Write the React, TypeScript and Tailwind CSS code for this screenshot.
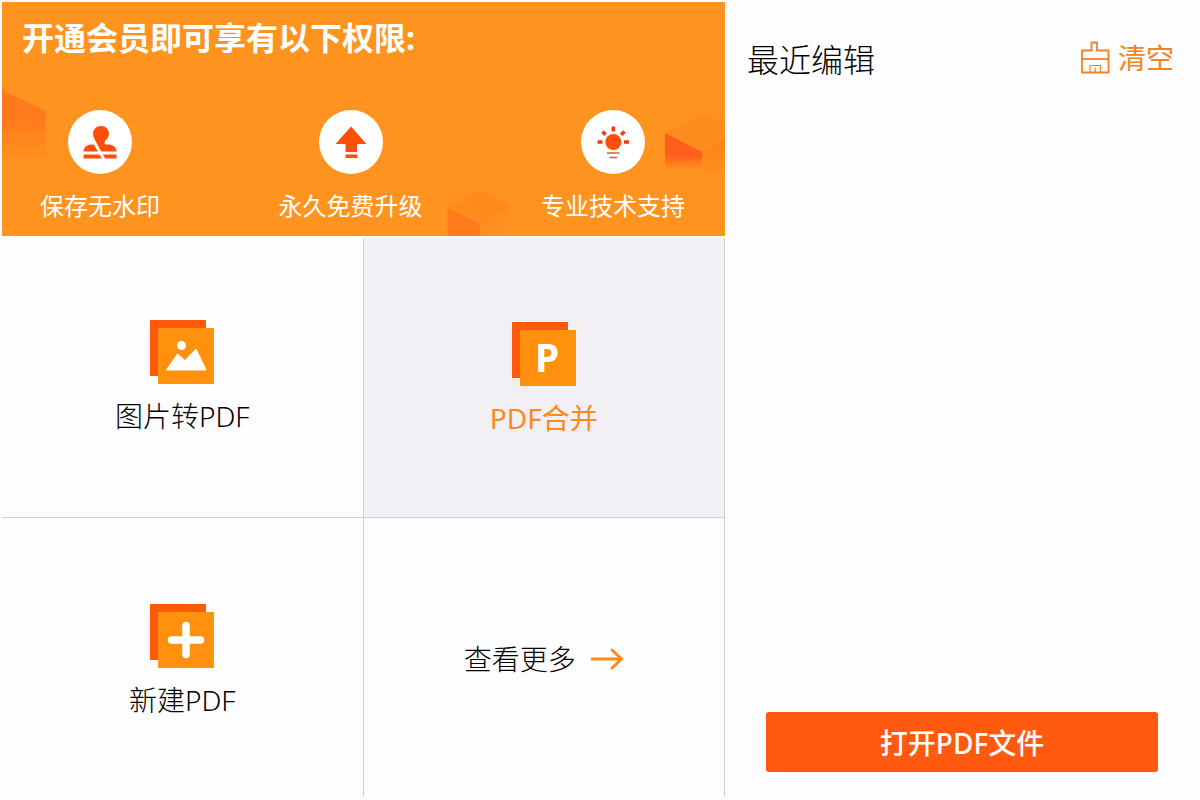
import React from 'react'

interface Feature {
  label: string
  icon: React.ReactNode
}

interface Tool {
  label: string
  icon: React.ReactNode
  cellClass: string
  textClass: string
}

function StampIcon() {
  return (
    <svg viewBox="0 0 64 64" className="w-16 h-16" fill="#ff4e0a" aria-hidden="true">
      <path d="M25 23.500C25 19.500 28.500 16 33 16C37.500 16 41 19.500 41 23.500C41 26.500 39.500 28.500 37.500 30.500C36.500 31.500 36.300 33 37 34.500H41C45 34.500 48.500 37.500 48.500 41.500H15.500C15.500 37.500 19 34.500 23 34.500H27C27.800 32.500 27.300 31 26.500 29.500C25.500 27.500 25 25.500 25 23.500Z" />
      <path d="M15.500 44.500H48.500V48.500H15.500Z" />
      <path d="M23.500 27L36 49.500" stroke="#fff" strokeWidth="3" />
    </svg>
  )
}

function UpgradeIcon() {
  return (
    <svg viewBox="0 0 64 64" className="w-16 h-16" fill="#ff4e0a" aria-hidden="true">
      <path d="M32 16.500L47.500 34H38V42H26.500V34H16.500Z" />
      <path d="M26.500 44.500H38.500V48H26.500Z" />
    </svg>
  )
}

function BulbIcon() {
  return (
    <svg viewBox="0 0 64 64" className="w-16 h-16" fill="#ff4e0a" aria-hidden="true">
      <circle cx="32.300" cy="32" r="8" />
      <g stroke="#f03a10" strokeWidth="3.500">
        <path d="M32.300 16.500V21.500" />
        <path d="M21.500 21.500L24.500 24.800" />
        <path d="M43.500 21.500L40.200 24.800" />
        <path d="M16.500 32H21.500" />
        <path d="M43 32H48" />
      </g>
      <path d="M26 43H38.500M28.500 47.500H36" stroke="#d9622a" strokeWidth="1.500" />
    </svg>
  )
}

function SheetIcon({ children }: { children: React.ReactNode }) {
  return (
    <svg viewBox="0 0 64 64" className="w-16 h-16" aria-hidden="true">
      <path d="M0 0H56V8H8V56H0Z" fill="#ff5a0a" />
      <path d="M8 8H64V64H8Z" fill="#ff910f" />
      {children}
    </svg>
  )
}

function BrushIcon() {
  return (
    <svg viewBox="0 0 30 34" className="w-[30px] h-[34px]" fill="none" stroke="#f58220" strokeWidth="1.800" aria-hidden="true">
      <path d="M2 31.500V9.500H11.500V1.500H17V9.500H28.500V31.500Z" />
      <path d="M2 18H28.500" />
      <path d="M10 31V24.500H20.500V31M15.200 26.500V31" strokeWidth="1.200" />
    </svg>
  )
}

function ArrowIcon() {
  return (
    <svg viewBox="0 0 34 24" className="w-[34px] h-6" fill="none" stroke="#ff8a0f" strokeWidth="3" aria-hidden="true">
      <path d="M1 12H31" />
      <path d="M22 3L31.500 12L22 21" strokeLinecap="round" strokeLinejoin="round" />
    </svg>
  )
}

// Faded cubes behind the banner content
function BannerCubes() {
  return (
    <svg viewBox="0 0 724 234" preserveAspectRatio="none" className="absolute inset-0 w-full h-full" aria-hidden="true">
      <defs>
        <linearGradient id="cubeLeft" x1="0" y1="0" x2="0" y2="1">
          <stop offset="0" stopColor="#ff7a1c" />
          <stop offset="0.400" stopColor="#ff7a1c" />
          <stop offset="1" stopColor="#ff7a1c" stopOpacity="0" />
        </linearGradient>
        <linearGradient id="cubeRight" x1="0" y1="0" x2="0" y2="1">
          <stop offset="0" stopColor="#ff5f1c" />
          <stop offset="0.600" stopColor="#ff5f1c" />
          <stop offset="1" stopColor="#ff5f1c" stopOpacity="0" />
        </linearGradient>
        <linearGradient id="cubeSide" x1="0" y1="0" x2="0" y2="1">
          <stop offset="0" stopColor="#ff8018" />
          <stop offset="1" stopColor="#ff8018" stopOpacity="0" />
        </linearGradient>
      </defs>
      <path d="M0 88L44 109V160H0Z" fill="url(#cubeLeft)" />
      <path d="M446 206L480 187L510 204L479 222Z" fill="#ff8b1c" />
      <path d="M446 206L479 222V234H446Z" fill="#ff7a1a" />
      <path d="M479 222L510 204L500 234H479Z" fill="#ff8f1e" />
      <path d="M664 131L702 112L724 120V138L701 150Z" fill="#ff8c1e" />
      <path d="M701 150L724 136V176H701Z" fill="url(#cubeSide)" />
      <path d="M664 131L701 150V168H664Z" fill="url(#cubeRight)" />
    </svg>
  )
}

const features: Feature[] = [
  { label: '保存无水印', icon: <StampIcon /> },
  { label: '永久免费升级', icon: <UpgradeIcon /> },
  { label: '专业技术支持', icon: <BulbIcon /> }
]

const tools: Tool[] = [
  {
    label: '图片转PDF',
    cellClass: 'border-b border-r',
    textClass: 'font-light text-black',
    icon: (
      <SheetIcon>
        <circle cx="31.500" cy="25.500" r="4.500" fill="#fff" />
        <path d="M16.500 50L27.500 34L35 40.500L46 29L56 50Z" fill="#fff" stroke="#fff" strokeWidth="1" strokeLinejoin="round" />
      </SheetIcon>
    )
  },
  {
    label: 'PDF合并',
    cellClass: 'border-b border-r bg-[#f2f0f4] pt-1',
    textClass: 'text-[#f98a1c]',
    icon: (
      <SheetIcon>
        <text x="23" y="50" fill="#fff" fontSize="39" fontWeight="700" fontFamily="'Noto Sans', sans-serif">P</text>
      </SheetIcon>
    )
  },
  {
    label: '新建PDF',
    cellClass: 'border-r pt-2',
    textClass: 'font-light text-black',
    icon: (
      <SheetIcon>
        <path d="M36 21.500V50.500M21.500 36H50.500" stroke="#fff" strokeWidth="7.500" strokeLinecap="round" />
      </SheetIcon>
    )
  }
]

function MemberBanner() {
  return (
    <section className="relative bg-[#ff9320] pt-4 pb-3.5">
      <BannerCubes />
      <div className="relative">
        <h1 className="pl-5 text-[32px] leading-10 font-bold text-white">开通会员即可享有以下权限:</h1>
        <ul className="mt-[52px] flex justify-between pl-[38px] pr-10">
          {features.map((feature) => (
            <li key={feature.label} className="flex flex-col items-center gap-4">
              <span className="rounded-full bg-white">{feature.icon}</span>
              <span className="text-2xl leading-8 text-white">{feature.label}</span>
            </li>
          ))}
        </ul>
      </div>
    </section>
  )
}

export default function App() {
  return (
    <div className="grid min-h-screen grid-cols-[29fr_19fr] bg-[#fdfcfe] font-['Noto_Sans','Noto_Sans_CJK_SC',sans-serif]">
      <main className="flex flex-col pt-0.5 pl-0.5 pb-[3px]">
        <MemberBanner />
        <div className="mt-0.5 grid flex-1 grid-cols-2 grid-rows-2">
          {tools.map((tool) => (
            <button
              key={tool.label}
              type="button"
              className={`flex flex-col items-center justify-center gap-3.5 border-[#d0d0d2] ${tool.cellClass}`}
            >
              {tool.icon}
              <span className={`text-[28px] leading-9 ${tool.textClass}`}>{tool.label}</span>
            </button>
          ))}
          <button type="button" className="flex items-center justify-center gap-3.5 border-r border-[#d0d0d2] pt-1">
            <span className="text-[28px] leading-9 font-light text-black">查看更多</span>
            <ArrowIcon />
          </button>
        </div>
      </main>

      <aside className="flex flex-col pt-10 pb-7">
        <header className="flex items-center justify-between pl-[22px] pr-[26px]">
          <h2 className="text-[32px] leading-10 font-light text-black">最近编辑</h2>
          <button type="button" className="flex items-center gap-2 pb-1 text-[28px] leading-9 text-[#f58220]">
            <BrushIcon />
            清空
          </button>
        </header>
        <button type="button" className="mt-auto ml-[41px] mr-[42px] h-[60px] rounded-[3px] bg-[#ff5a10] pt-0.5 text-[28px] leading-9 font-medium text-white">
          打开PDF文件
        </button>
      </aside>
    </div>
  )
}
